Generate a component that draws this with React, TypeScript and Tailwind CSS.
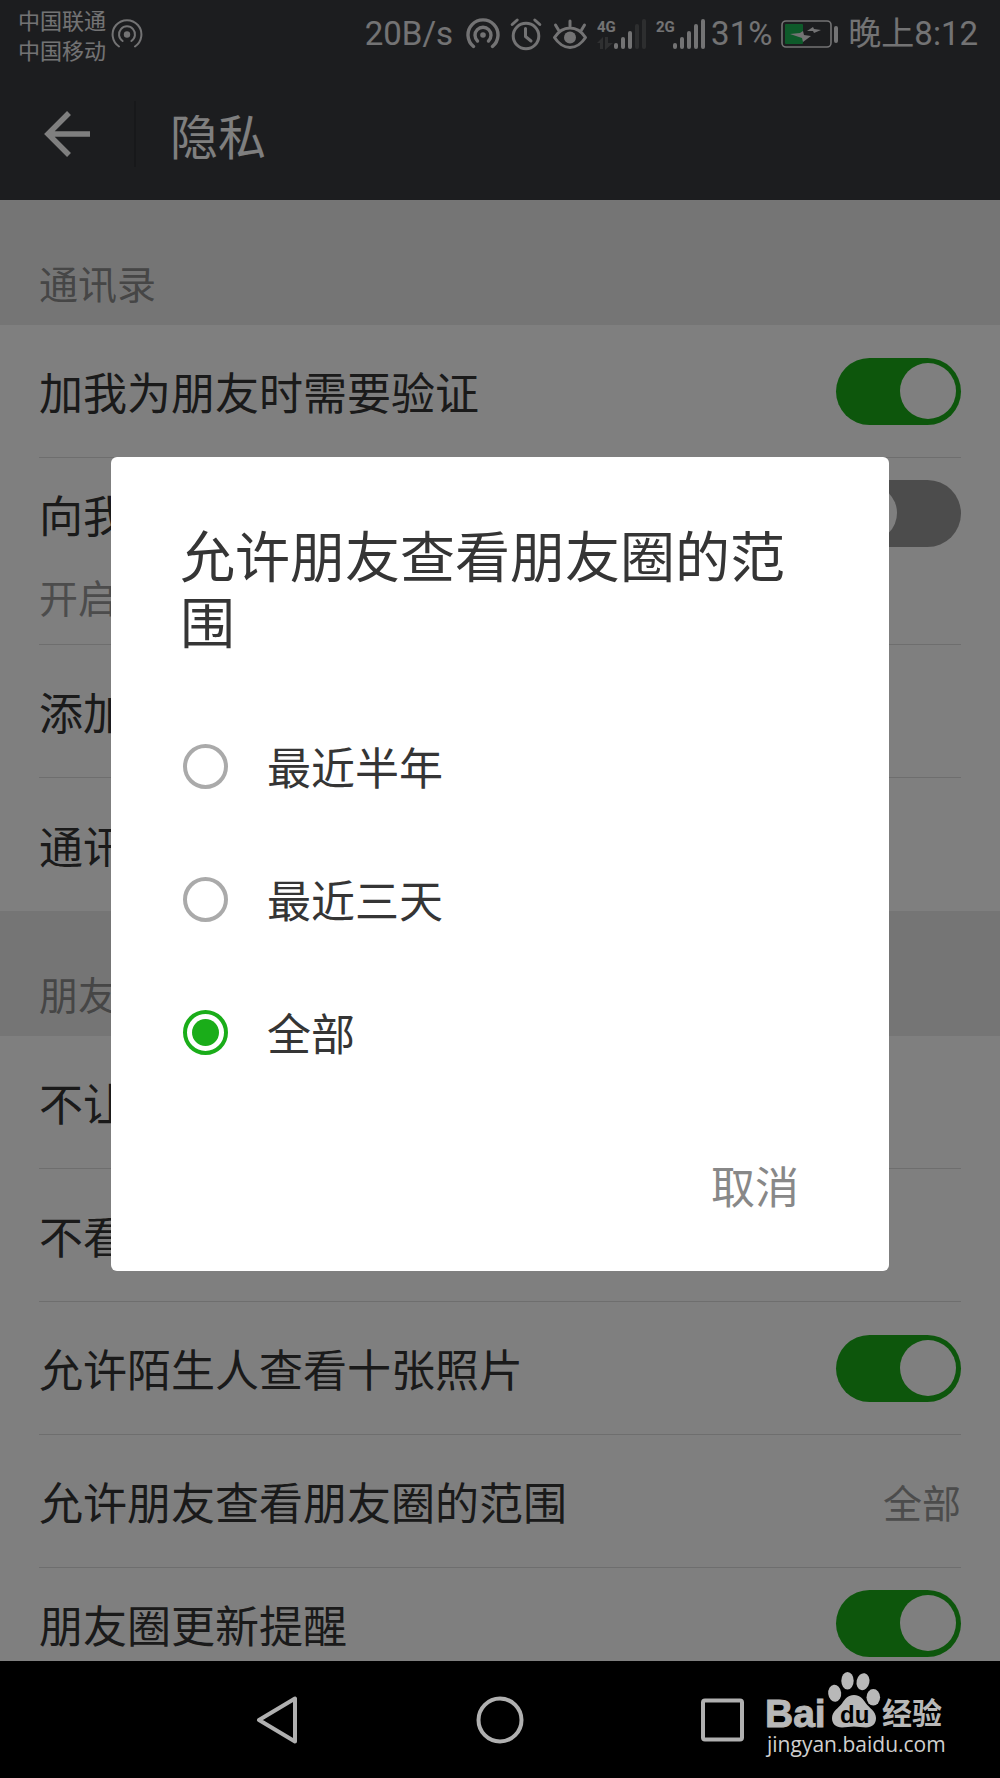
import { useState } from 'react';

const RANGES = ['最近半年', '最近三天', '全部'];

const HotspotIcon = () => (
  <svg className="w-[34px] h-[34px]" viewBox="0 0 34 34" fill="none" stroke="currentColor" strokeWidth="3.4" strokeLinecap="round" aria-hidden="true">
    <path d="M7.5 29.5a15 15 0 1 1 19 0" />
    <path d="M11.5 24a8 8 0 1 1 11 0" />
    <circle cx="17" cy="18" r="2.8" fill="currentColor" stroke="none" />
  </svg>
);

const CarrierSignalIcon = () => (
  <svg className="w-8 h-8" viewBox="0 0 32 32" fill="none" stroke="currentColor" strokeWidth="2" strokeLinecap="round" aria-hidden="true">
    <path d="M8 28.5a14.4 14.4 0 1 1 16 0" />
    <path d="M11.6 23a8 8 0 1 1 8.8 0" />
    <circle cx="16" cy="16.5" r="3.2" fill="currentColor" stroke="none" />
  </svg>
);

const AlarmIcon = () => (
  <svg className="w-[34px] h-[34px]" viewBox="0 0 34 34" fill="none" stroke="currentColor" strokeWidth="3" strokeLinecap="round" strokeLinejoin="round" aria-hidden="true">
    <circle cx="17" cy="19" r="12.8" />
    <path d="M16.5 11.5v8l5.5 4.5" />
    <path d="M3.2 7.5l5-4.5M30.8 7.5l-5-4.5" />
  </svg>
);

const EyeIcon = () => (
  <svg className="w-9 h-[34px]" viewBox="0 0 36 34" fill="none" stroke="currentColor" strokeWidth="3" strokeLinecap="round" strokeLinejoin="round" aria-hidden="true">
    <path d="M2.5 20.5C6 15 12 11 18 11s12 4 15.5 9.5C30 26 24 30.5 18 30.5S6 26 2.5 20.5z" />
    <circle cx="18" cy="20.5" r="6" fill="currentColor" stroke="none" />
    <path d="M18 9V4M6.5 13L3.500 8M29.5 13l3-5" />
  </svg>
);

const SignalIcon = ({ label, strength, data }: { label: string; strength: number; data?: boolean }) => (
  <svg className="w-[50px] h-[34px]" viewBox="0 0 50 34" aria-hidden="true">
    <text x="0" y="15" fill="currentColor" fontFamily="Roboto, sans-serif" fontSize="15" fontWeight="700">
      {label}
    </text>
    {data && (
      <path d="M0 26l6-6v12h-3v-6zM8 20h3v6h5l-8 7z" fill="currentColor" opacity="0.22" />
    )}
    {[6, 12, 18, 25, 30].map((height, index) => (
      <rect
        key={height}
        x={17 + index * 7}
        y={32 - height}
        width="4"
        height={height}
        rx="2"
        fill="currentColor"
        opacity={index < strength ? 1 : 0.2}
      />
    ))}
  </svg>
);

const BatteryIcon = () => (
  <svg className="w-[58px] h-7" viewBox="0 0 58 28" aria-hidden="true">
    <rect x="1" y="1" width="49" height="26" rx="4" fill="none" stroke="currentColor" strokeWidth="1.6" />
    <rect x="4" y="4" width="18" height="20" rx="1" fill="#1cb455" />
    <rect x="53" y="6" width="4" height="17" rx="2" fill="currentColor" />
    <path d="M9 14l10-1 3-2 1 4 7 1-8 6-1-4zM26 11l6-4 1 2 7 1-7 3-1-2z" fill="currentColor" />
  </svg>
);

const StatusBar = () => (
  <div className="flex h-[68px] items-center justify-between pl-[18px] pr-[22px] text-[#e6e6e8]">
    <div className="flex items-center gap-[5px]">
      <div className="text-[22px] leading-[30px]">
        <p>中国联通</p>
        <p>中国移动</p>
      </div>
      <CarrierSignalIcon />
    </div>
    <div className="flex items-center gap-[9px] whitespace-nowrap font-['Roboto','Noto_Sans_CJK_SC',sans-serif] text-[33px] leading-[40px]">
      <span>20B/s</span>
      <div className="-mr-1 ml-1 flex items-center gap-[9px]">
        <HotspotIcon />
        <AlarmIcon />
        <EyeIcon />
        <SignalIcon label="4G" strength={3} data />
        <SignalIcon label="2G" strength={5} />
      </div>
      <span>31%</span>
      <BatteryIcon />
      <span>晚上8:12</span>
    </div>
  </div>
);

const TitleBar = () => (
  <div className="flex h-[132px] items-center">
    <button type="button" aria-label="返回" className="flex h-[66px] w-[136px] items-center justify-center border-r-2 border-[#2f3034] text-white">
      <svg className="w-[46px] h-[46px]" viewBox="0 0 46 46" fill="none" stroke="currentColor" strokeWidth="5.5" aria-hidden="true">
        <path d="M25 2L4 23l21 21M4 23h42" />
      </svg>
    </button>
    <h1 className="pl-[34px] text-[48px] leading-[66px] text-white">隐私</h1>
  </div>
);

const Switch = ({ id, defaultChecked }: { id: string; defaultChecked?: boolean }) => (
  <input
    id={id}
    type="checkbox"
    role="switch"
    defaultChecked={defaultChecked}
    className="h-[67px] w-[125px] shrink-0 appearance-none rounded-full bg-[#999999] p-[5px] before:block before:size-[56px] before:rounded-full before:bg-white checked:bg-[#1aad19] checked:before:translate-x-[59px]"
  />
);

const SectionTitle = ({ children }: { children: string }) => (
  <h2 className="flex h-[125px] items-end bg-[#ebebeb] px-[39px] pb-[17px] text-[39px] leading-[52px] text-[#8c8c8c]">
    {children}
  </h2>
);

const ROW = 'flex min-h-[133px] w-full items-center justify-between text-left text-[44px] leading-[60px] text-[#353535]';

const SettingsList = () => (
  <main className="min-h-0 flex-1 overflow-hidden bg-white">
    <SectionTitle>通讯录</SectionTitle>
    <div className="divide-y divide-[#dcdcdc] px-[39px]">
      <div className={ROW}>
        <label htmlFor="verify">加我为朋友时需要验证</label>
        <Switch id="verify" defaultChecked />
      </div>
      <div className="pt-[22px] pb-[22px]">
        <div className="flex items-center justify-between text-[44px] leading-[60px] text-[#353535]">
          <label htmlFor="recommend">向我</label>
          <Switch id="recommend" />
        </div>
        <p className="mt-[23px] text-[39px] leading-[52px] text-[#999999]">开启</p>
      </div>
      <button type="button" className={ROW}>添加</button>
      <button type="button" className={ROW}>通讯</button>
    </div>
    <SectionTitle>朋友</SectionTitle>
    <div className="divide-y divide-[#dcdcdc] px-[39px]">
      <button type="button" className={ROW}>不让</button>
      <button type="button" className={ROW}>不看</button>
      <div className={ROW}>
        <label htmlFor="stranger">允许陌生人查看十张照片</label>
        <Switch id="stranger" defaultChecked />
      </div>
      <button type="button" className={ROW}>
        <span>允许朋友查看朋友圈的范围</span>
        <span className="text-[39px] text-[#999999]">全部</span>
      </button>
      <div className="flex items-center justify-between pt-[22px] text-[44px] leading-[60px] text-[#353535]">
        <label htmlFor="update">朋友圈更新提醒</label>
        <Switch id="update" defaultChecked />
      </div>
    </div>
  </main>
);

const RangeDialog = () => {
  const [range, setRange] = useState('全部');

  return (
    <div className="absolute inset-0 flex items-center justify-center bg-black/50 px-[111px] pt-[66px]">
      <div role="dialog" aria-modal="true" aria-labelledby="range-title" className="w-full rounded-md bg-white px-[69px] pt-[63px] pb-[53px] text-[#353535]">
        <h2 id="range-title" className="text-[55px] leading-[66px]">允许朋友查看朋友圈的范围</h2>
        <div className="mt-12">
          {RANGES.map((item) => (
            <label key={item} className="flex h-[133px] items-center gap-[39px] pl-[3px] text-[44px] leading-[60px]">
              <input
                type="radio"
                name="range"
                value={item}
                checked={range === item}
                onChange={() => setRange(item)}
                className="size-[45px] shrink-0 appearance-none rounded-full border-4 border-[#aaaaaa] p-[5px] checked:border-[#1aad19] checked:before:block checked:before:size-[27px] checked:before:rounded-full checked:before:bg-[#1aad19]"
              />
              {item}
            </label>
          ))}
        </div>
        <div className="mt-[53px] flex justify-end pr-[21px]">
          <button type="button" className="text-[44px] leading-[66px] text-[#888888]">取消</button>
        </div>
      </div>
    </div>
  );
};

const BaiduMark = () => (
  <div className="absolute right-[55px] bottom-[21px] w-[178px] text-[#b8b8b8]">
    <svg className="w-full h-[58px] overflow-visible" viewBox="0 0 178 58" fill="currentColor" role="img" aria-label="Baidu 经验">
      <text x="-2" y="54" fontFamily="Liberation Sans, sans-serif" fontSize="39" fontWeight="700" stroke="currentColor" strokeWidth="1">
        Bai
      </text>
      <ellipse cx="67.7" cy="20.3" rx="6.5" ry="8.5" transform="rotate(-6 67.7 20.3)" />
      <ellipse cx="80.5" cy="7.7" rx="6.2" ry="8.8" />
      <ellipse cx="96" cy="8.7" rx="6.4" ry="8.6" transform="rotate(12 96 8.7)" />
      <ellipse cx="106.3" cy="24.3" rx="6.8" ry="8.3" />
      <path d="M87 22c6 0 9 4 12 8.5 3 4 10 8 10 14.500 0 6-4 9.500-10 9.500-4 0-8-1-12-1s-8 1-12 1c-6 0-10-3.500-10-9.500 0-6.500 7-10.500 10-14.500 3-4.500 6-8.500 12-8.500z" />
      <text x="73" y="50" fill="#000000" fontFamily="Liberation Sans, sans-serif" fontSize="24" fontWeight="700">
        du
      </text>
      <text x="115" y="51" fontFamily="Noto Sans CJK SC, sans-serif" fontSize="30" fontWeight="700">
        经验
      </text>
    </svg>
    <p className="font-['Open_Sans',sans-serif] text-[21px] leading-[26px] text-[#d0d0d0]">jingyan.baidu.com</p>
  </div>
);

const NavBar = () => (
  <nav className="relative flex h-[117px] items-center justify-center gap-[175px] bg-black text-[#b0b0b0]">
    <button type="button" aria-label="返回">
      <svg className="size-12" viewBox="0 0 48 48" fill="none" stroke="currentColor" strokeWidth="4" strokeLinejoin="round" aria-hidden="true">
        <path d="M42 2.500v43L6 24z" />
      </svg>
    </button>
    <button type="button" aria-label="主屏幕">
      <svg className="size-12" viewBox="0 0 48 48" fill="none" stroke="currentColor" strokeWidth="4" aria-hidden="true">
        <circle cx="24" cy="24" r="21.5" />
      </svg>
    </button>
    <button type="button" aria-label="最近任务">
      <svg className="size-12" viewBox="0 0 48 48" fill="none" stroke="currentColor" strokeWidth="4" aria-hidden="true">
        <rect x="4" y="4.5" width="39" height="39" rx="2" />
      </svg>
    </button>
    <BaiduMark />
  </nav>
);

const App = () => {
  return (
    <div className="flex h-screen flex-col font-['Noto_Sans_CJK_SC',sans-serif]">
      <div className="relative flex min-h-0 flex-1 flex-col">
        <header className="bg-[#393a3e]">
          <StatusBar />
          <TitleBar />
        </header>
        <SettingsList />
        <RangeDialog />
      </div>
      <NavBar />
    </div>
  );
};

export default App;
